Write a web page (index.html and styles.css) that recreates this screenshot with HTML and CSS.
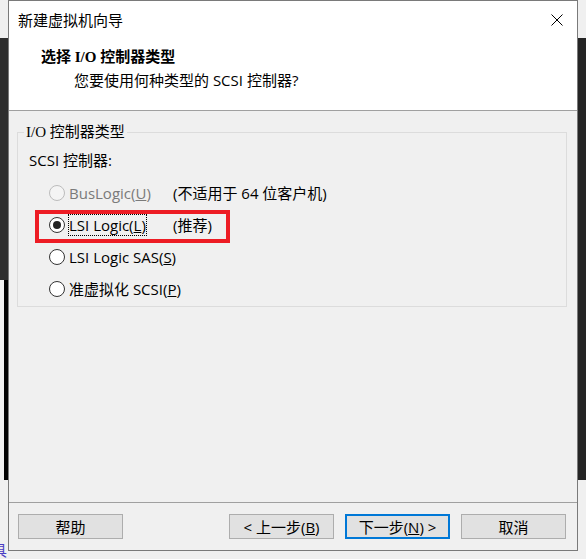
FILE: index.html
```html
<!DOCTYPE html>
<html lang="zh-CN">
<head>
<meta charset="utf-8">
<title>新建虚拟机向导</title>
<link rel="stylesheet" href="styles.css">
</head>
<body>
<div class="desktop">
  <div class="dialog">
    <div class="titlebar">
      <span class="title">新建虚拟机向导</span>
      <svg class="close" width="12" height="12" viewBox="0 0 12 12"><path d="M0.5 0.5 L11.5 11.5 M11.5 0.5 L0.5 11.5" stroke="#000" stroke-width="1" fill="none"/></svg>
    </div>
    <div class="header">
      <div class="h-title">选择 I/O 控制器类型</div>
      <div class="h-sub">您要使用何种类型的 SCSI 控制器?</div>
    </div>
    <div class="body">
      <fieldset class="group">
        <legend class="legend">I/O 控制器类型</legend>
        <div class="group-inner">
          <div class="label">SCSI 控制器:</div>
          <div class="options">
            <div class="opt disabled"><span class="radio"></span><span class="opt-label"><span>BusLogic(<u>U</u>)</span></span><span class="note">(不适用于 64 位客户机)</span></div>
            <div class="opt"><span class="radio checked"></span><span class="opt-label"><span class="focus">LSI Logic(<u>L</u>)</span></span><span class="note">(推荐)</span></div>
            <div class="opt"><span class="radio"></span><span class="opt-label"><span>LSI Logic SAS(<u>S</u>)</span></span></div>
            <div class="opt"><span class="radio"></span><span class="opt-label"><span>准虚拟化 SCSI(<u>P</u>)</span></span></div>
          </div>
        </div>
      </fieldset>
    </div>
    <div class="footer">
      <button class="btn help">帮助</button>
      <button class="btn">&lt; 上一步(<u>B</u>)</button>
      <button class="btn default">下一步(<u>N</u>) &gt;</button>
      <button class="btn">取消</button>
    </div>
  </div>
  <div class="highlight"></div>
  <span class="stray">具</span>
</div>
</body>
</html>
```
FILE: styles.css
```css
html, body {
  margin: 0;
  padding: 0;
}
body {
  font-family: "Open Sans", "Noto Sans CJK SC", sans-serif;
  font-size: 15px;
  color: #000;
}
.desktop {
  position: relative;
  width: 586px;
  height: 559px;
  overflow: hidden;
  background:
    linear-gradient(#000, #000) 4px 280px / 4px 200px no-repeat,
    linear-gradient(#2e2e2e, #2e2e2e) 0 38px / 8px 242px no-repeat,
    linear-gradient(#252525, #252525) 578px 38px / 8px 442px no-repeat,
    #f0f0f0;
}
.dialog {
  margin-left: 8px;
  width: 570px;
  height: 551px;
  box-sizing: border-box;
  border: 1px solid #7a7a7a;
  background: #f0f0f0;
  display: flex;
  flex-direction: column;
}
.titlebar {
  height: 38px;
  background: #fff;
  display: flex;
  align-items: center;
  justify-content: space-between;
  padding: 0 14px 0 9px;
  flex: none;
}
.title {
  line-height: 20px;
  font-family: "Noto Sans CJK SC", sans-serif;
}
.close {
  display: block;
}
.header {
  background: #fff;
  height: 72px;
  box-sizing: border-box;
  border-bottom: 1px solid #a0a0a0;
  padding: 8px 0 0 32px;
  flex: none;
}
.h-title {
  font-family: "Liberation Serif", "Noto Sans CJK SC", serif;
  font-weight: bold;
  font-size: 15px;
  line-height: 20px;
}
.h-sub {
  margin-top: 3px;
  padding-left: 33px;
  line-height: 20px;
}
.body {
  flex: 1;
  padding: 11px 10px 0 8px;
}
.group {
  margin: 0;
  border: 1px solid #dcdcdc;
  padding: 8px 0 7px 0;
  min-width: 0;
}
.legend {
  margin-left: 6px;
  padding: 0 2px;
  line-height: 20px;
  font-family: "Liberation Serif", "Noto Sans CJK SC", serif;
}
.group-inner {
  padding-left: 11px;
}
.label {
  line-height: 20px;
}
.options {
  margin-top: 13px;
  padding-left: 20px;
  display: flex;
  flex-direction: column;
  gap: 12px;
}
.opt {
  display: flex;
  align-items: center;
  height: 20px;
  line-height: 20px;
}
.radio {
  width: 16px;
  height: 16px;
  box-sizing: border-box;
  border: 1px solid #333;
  border-radius: 50%;
  background: #fff;
  margin-right: 4px;
  position: relative;
  flex: none;
}
.radio.checked::after {
  content: "";
  position: absolute;
  left: 3px;
  top: 3px;
  width: 8px;
  height: 8px;
  border-radius: 50%;
  background: #222;
}
.opt.disabled .radio {
  border-color: #bcbcbc;
  background: #f4f4f4;
}
.opt.disabled .opt-label {
  color: #7a7a7a;
}
.opt-label {
  width: 104px;
  white-space: nowrap;
}
.focus {
  outline: 1px dotted #000;
}
.note {
  white-space: nowrap;
}
.footer {
  flex: none;
  border-top: 1px solid #a0a0a0;
  padding: 11px 11px 11px 9px;
  display: flex;
  gap: 11px;
}
.btn {
  width: 105px;
  height: 25px;
  box-sizing: border-box;
  background: #e1e1e1;
  border: 1px solid #adadad;
  font: inherit;
  font-size: 15px;
  line-height: 20px;
  padding: 0;
  color: #000;
}
.btn.help {
  margin-right: auto;
}
.btn.default {
  border: 2px solid #0078d7;
}
.highlight {
  position: absolute;
  left: 35px;
  top: 210px;
  width: 195px;
  height: 33px;
  box-sizing: border-box;
  border: 4px solid #ed1c24;
}
.stray {
  position: absolute;
  left: -8px;
  top: 541px;
  font-family: "Noto Sans CJK SC", sans-serif;
  font-size: 15px;
  line-height: 18px;
  color: #4b3fc4;
}
```
